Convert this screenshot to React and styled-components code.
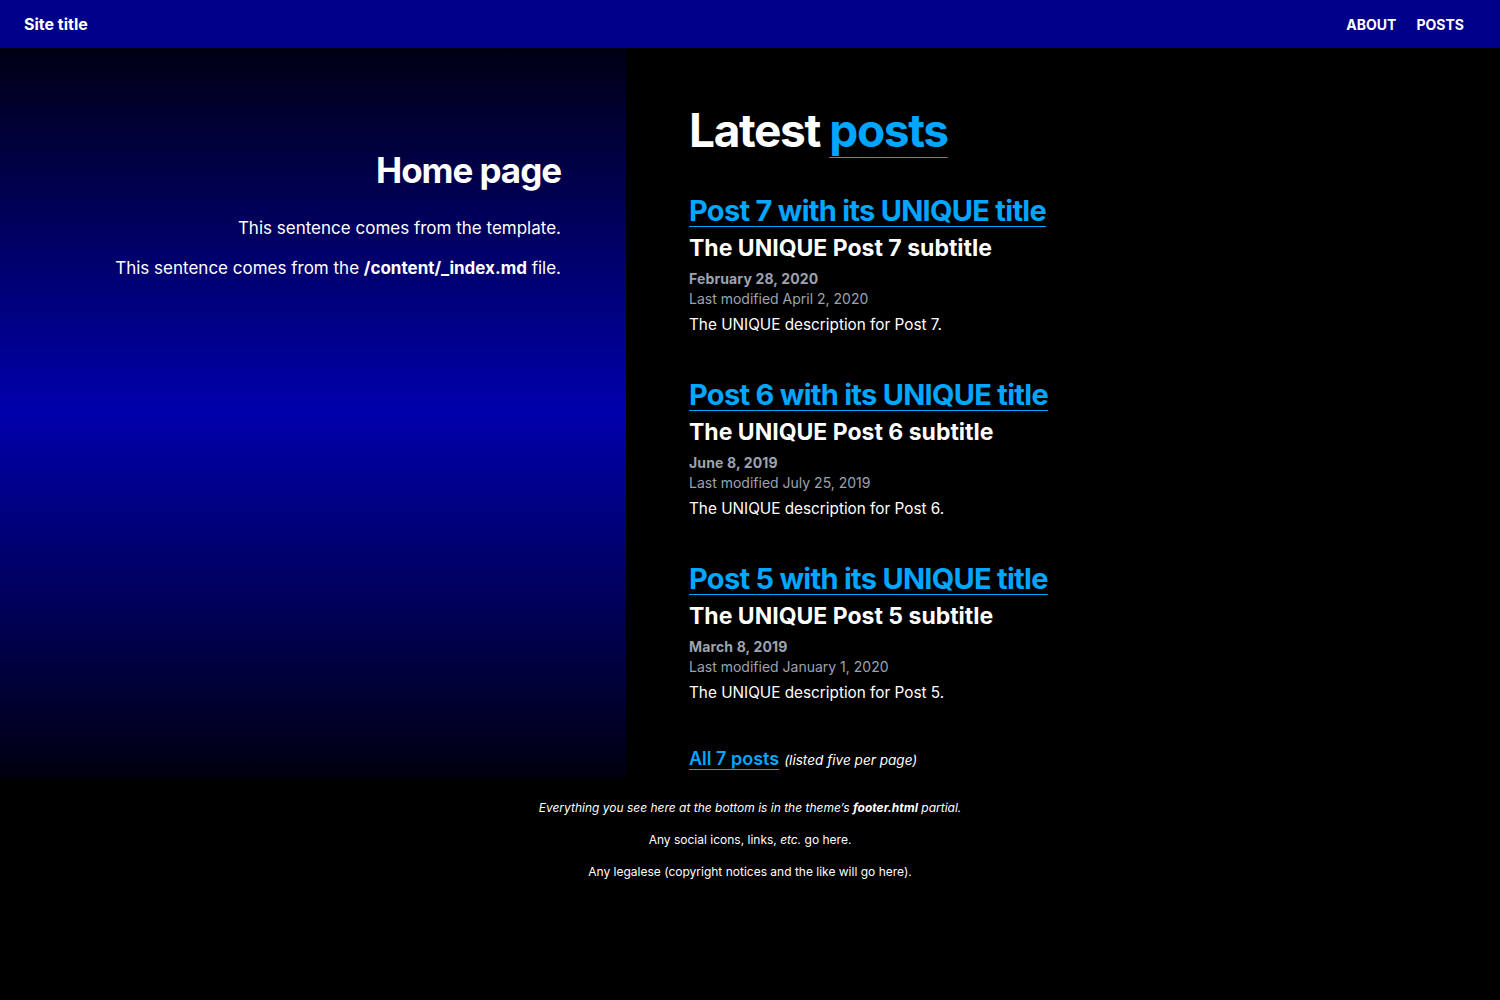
import React from "react";
import styled, { createGlobalStyle } from "styled-components";

const posts = [
	{ n: 7, date: "February 28, 2020", mod: "April 2, 2020" },
	{ n: 6, date: "June 8, 2019", mod: "July 25, 2019" },
	{ n: 5, date: "March 8, 2019", mod: "January 1, 2020" },
];

const GlobalStyle = createGlobalStyle`
	html, body {
		margin: 0;
		background: #000;
		color: #fff;
		font-family: Inter, "Noto Sans", sans-serif;
	}
	a {
		color: #00a6ff;
		text-decoration: underline;
		text-underline-offset: 4px;
		text-decoration-thickness: 1px;
	}
`;

const Header = styled.header`
	height: 48px;
	background: #00008b;
	display: flex;
	align-items: center;
	justify-content: space-between;
	padding: 0 36px 0 24px;
`;

const SiteTitle = styled.div`
	font-size: 16px;
	font-weight: 700;
`;

const Nav = styled.nav`
	display: flex;
	gap: 20px;
	font-size: 14px;
	font-weight: 700;
	text-transform: uppercase;
`;

const Main = styled.main`
	display: grid;
	grid-template-columns: 626px 1fr;
`;

const Side = styled.section`
	background: linear-gradient(to bottom, #000014 0%, #0000ab 50%, #000010 100%);
	text-align: right;
	padding: 101px 65px 0 0;
	h1 {
		margin: 0 0 26px;
		font-size: 35px;
		line-height: 1.2;
		font-weight: 700;
		letter-spacing: -0.03em;
	}
	p {
		margin: 0 0 18px;
		font-size: 17px;
		line-height: 22px;
	}
`;

const Content = styled.section`
	padding: 55px 63px 8px;
`;

const PageTitle = styled.h1`
	margin: 0 0 36px;
	font-size: 46px;
	line-height: 1.2;
	font-weight: 700;
	letter-spacing: -0.03em;
	a {
		text-underline-offset: 10px;
	}
`;

const Post = styled.article`
	margin-bottom: 42px;
`;

const PostTitle = styled.h2`
	margin: 0;
	font-size: 29px;
	line-height: 34px;
	font-weight: 700;
	letter-spacing: -0.025em;
	a {
		text-underline-offset: 5px;
	}
`;

const Subtitle = styled.h3`
	margin: 5px 0 6px;
	font-size: 23px;
	line-height: 30px;
	font-weight: 700;
`;

const Meta = styled.div`
	font-size: 14px;
	line-height: 20px;
	color: #9ca3af;
	font-weight: ${(p) => (p.$bold ? 700 : 400)};
	letter-spacing: ${(p) => (p.$bold ? "0.01em" : "0")};
`;

const Desc = styled.p`
	margin: 5px 0 0;
	font-size: 15.3px;
	line-height: 22px;
`;

const AllPosts = styled.p`
	margin: 0;
	padding-top: 2px;
	a {
		font-size: 18px;
		font-weight: 600;
	}
	em {
		font-size: 13.6px;
		margin-left: 5px;
	}
`;

const Footer = styled.footer`
	text-align: center;
	font-size: 12px;
	padding-top: 23px;
	p {
		margin: 0 0 16px;
		line-height: 16px;
	}
`;

export default function App() {
	return (
		<>
			<GlobalStyle />
			<Header>
				<SiteTitle>Site title</SiteTitle>
				<Nav>
					<span>About</span>
					<span>Posts</span>
				</Nav>
			</Header>
			<Main>
				<Side>
					<h1>Home page</h1>
					<p>This sentence comes from the template.</p>
					<p>This sentence comes from the <strong>/content/_index.md</strong> file.</p>
				</Side>
				<Content>
					<PageTitle>Latest <a href="#">posts</a></PageTitle>
					{posts.map((post) => (
						<Post key={post.n}>
							<PostTitle><a href="#">Post {post.n} with its UNIQUE title</a></PostTitle>
							<Subtitle>The UNIQUE Post {post.n} subtitle</Subtitle>
							<Meta $bold>{post.date}</Meta>
							<Meta>Last modified {post.mod}</Meta>
							<Desc>The UNIQUE description for Post {post.n}.</Desc>
						</Post>
					))}
					<AllPosts><a href="#">All 7 posts</a><em>(listed five per page)</em></AllPosts>
				</Content>
			</Main>
			<Footer>
				<p><em>Everything you see here at the bottom is in the theme’s <strong>footer.html</strong> partial.</em></p>
				<p>Any social icons, links, <em>etc.</em> go here.</p>
				<p>Any legalese (copyright notices and the like will go here).</p>
			</Footer>
		</>
	);
}
